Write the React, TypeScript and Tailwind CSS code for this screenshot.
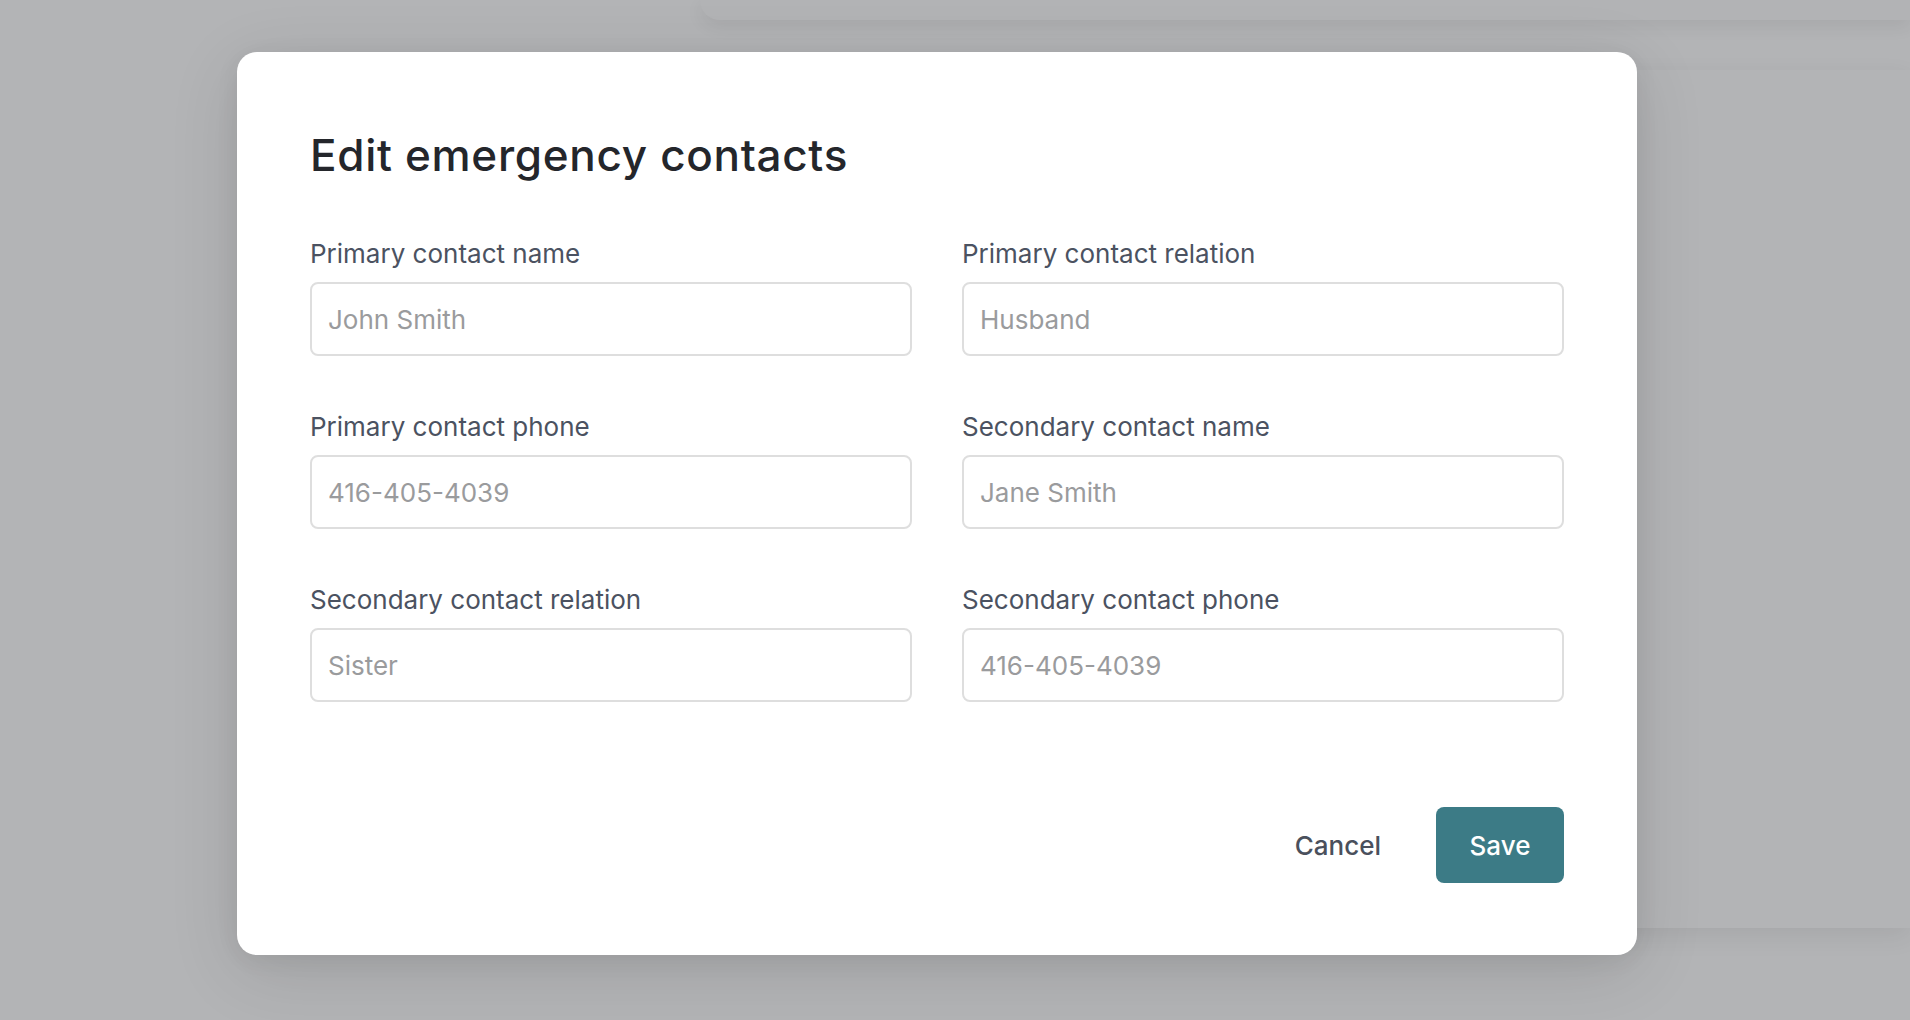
import React from 'react';

const fields = [
  { label: 'Primary contact name', placeholder: 'John Smith' },
  { label: 'Primary contact relation', placeholder: 'Husband' },
  { label: 'Primary contact phone', placeholder: '416-405-4039' },
  { label: 'Secondary contact name', placeholder: 'Jane Smith' },
  { label: 'Secondary contact relation', placeholder: 'Sister' },
  { label: 'Secondary contact phone', placeholder: '416-405-4039' },
];

export default function App() {
  return (
    <div className="relative h-[1020px] w-full overflow-hidden bg-[#b3b4b6] font-['Inter',sans-serif]">
      {/* page behind the overlay */}
      <div className="flex flex-col">
        <div className="ml-[700px] h-[20px] rounded-bl-[20px] bg-[#b2b3b5] shadow-[0_6px_18px_rgba(0,0,0,0.07)]" />
        <div className="ml-auto mt-[50px] h-[858px] w-[400px] bg-[#b3b4b6] shadow-[0_8px_24px_rgba(0,0,0,0.07)]" />
      </div>

      {/* dialog */}
      <div className="absolute left-[237px] top-[52px] w-[1400px] rounded-[20px] bg-white px-[73px] pb-[72px] pt-[78px] shadow-[0_4px_24px_rgba(0,0,0,0.06),0_16px_70px_rgba(0,0,0,0.12)]">
        <h2 className="text-[44px] font-medium leading-[50px] tracking-[0.7px] text-[#24262b]">Edit emergency contacts</h2>

        <div className="mt-[57px] grid grid-cols-2 gap-x-[50px] gap-y-[54px]">
          {fields.map((f) => (
            <label key={f.label} className="flex flex-col gap-[12px]">
              <span className="text-[26px] leading-[33px] text-[#4b5261]">{f.label}</span>
              <input
                placeholder={f.placeholder}
                className="h-[74px] rounded-[8px] border-2 border-[#dedede] bg-white px-[16px] text-[26px] text-[#24262b] outline-none placeholder:text-[#9a9b9d]"
              />
            </label>
          ))}
        </div>

        <div className="mt-[105px] flex items-center justify-end gap-[30px]">
          <button className="px-[25px] text-[26px] font-medium text-[#4a505c]">Cancel</button>
          <button className="h-[76px] w-[128px] rounded-[8px] bg-[#3c7b86] text-[26px] font-medium text-white">Save</button>
        </div>
      </div>
    </div>
  );
}
